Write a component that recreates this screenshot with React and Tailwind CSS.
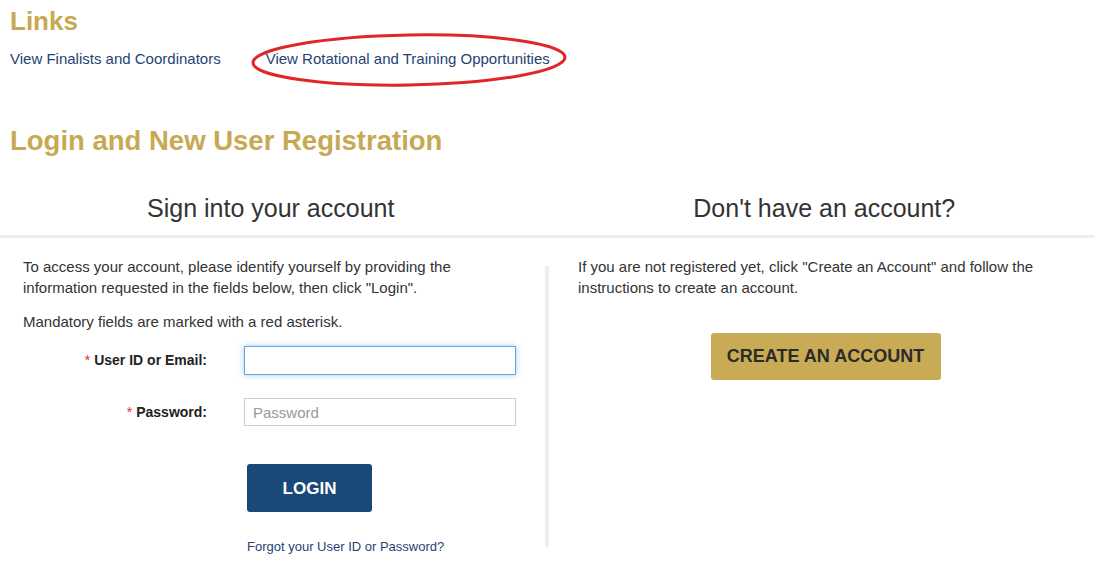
import React from 'react';

export default function App() {
  return (
    <div className="min-h-screen bg-white text-[#333] font-['Liberation_Sans',Arial,sans-serif]">
      <div className="px-[10px] pt-[6px]">
        <h1 className="text-[26px] font-bold text-[#c8a953] leading-[30px]">Links</h1>
        <div className="flex items-center mt-[14px] text-[15px] text-[#1e4474] leading-[18px]">
          <a href="#" className="mr-[45px]">View Finalists and Coordinators</a>
          <span className="relative">
            <a href="#">View Rotational and Training Opportunities</a>
            <svg className="absolute left-[-15px] top-[-17px] pointer-events-none" width="318" height="56" viewBox="0 0 318 56">
              <ellipse cx="158" cy="27" rx="156" ry="25" fill="none" stroke="#e0262b" strokeWidth="3" transform="rotate(-1 158 27)" />
            </svg>
          </span>
        </div>
        <h2 className="mt-[56px] text-[27.5px] font-bold text-[#c8a953] leading-[34px]">Login and New User Registration</h2>
      </div>

      <div className="grid grid-cols-[545px_4px_1fr] mt-[36px]">
        <div className="col-span-3 grid grid-cols-2 border-b-[3px] border-[#eeeeee] pb-[13px]">
          <h3 className="text-[25px] text-center leading-[28px] pr-[6px]">Sign into your account</h3>
          <h3 className="text-[25px] text-center leading-[28px] pl-[6px]">Don't have an account?</h3>
        </div>

        <div className="pl-[23px] pt-[18px] text-[15px] leading-[21px]">
          <p>To access your account, please identify yourself by providing the<br />information requested in the fields below, then click "Login".</p>
          <p className="mt-[13px]">Mandatory fields are marked with a red asterisk.</p>

          <div className="mt-[14px] flex items-center">
            <label className="w-[184px] text-right text-[14px] font-bold text-[#222]">
              <span className="text-[#d9302c] font-normal mr-[4px]">*</span>User ID or Email:
            </label>
            <input className="ml-[37px] w-[272px] h-[29px] border border-[#66a3d4] shadow-[0_0_6px_rgba(102,175,233,0.6)] outline-none px-[8px] text-[15px]" />
          </div>
          <div className="mt-[23px] flex items-center">
            <label className="w-[184px] text-right text-[14px] font-bold text-[#222]">
              <span className="text-[#d9302c] font-normal mr-[4px]">*</span>Password:
            </label>
            <input type="password" placeholder="Password" className="ml-[37px] w-[272px] h-[28px] border border-[#cccccc] outline-none px-[8px] text-[15px] placeholder:text-[#999]" />
          </div>

          <div className="pl-[224px]">
            <button className="mt-[38px] w-[125px] h-[48px] bg-[#1a4979] text-white text-[17px] font-bold rounded-[3px]">LOGIN</button>
            <a href="#" className="block mt-[27px] text-[13px] text-[#1e4474] leading-[16px]">Forgot your User ID or Password?</a>
          </div>
        </div>

        <div className="bg-[#eeeeee] mt-[28px] mb-[8px]"></div>

        <div className="pl-[29px] pt-[18px] text-[15px] leading-[21px]">
          <p>If you are not registered yet, click "Create an Account" and follow the<br />instructions to create an account.</p>
          <div className="flex justify-center pr-[22px] mt-[35px]">
            <button className="w-[230px] h-[47px] bg-[#c9ab55] text-[#2b2b2b] text-[18px] font-bold rounded-[3px]">CREATE AN ACCOUNT</button>
          </div>
        </div>
      </div>
    </div>
  );
}
